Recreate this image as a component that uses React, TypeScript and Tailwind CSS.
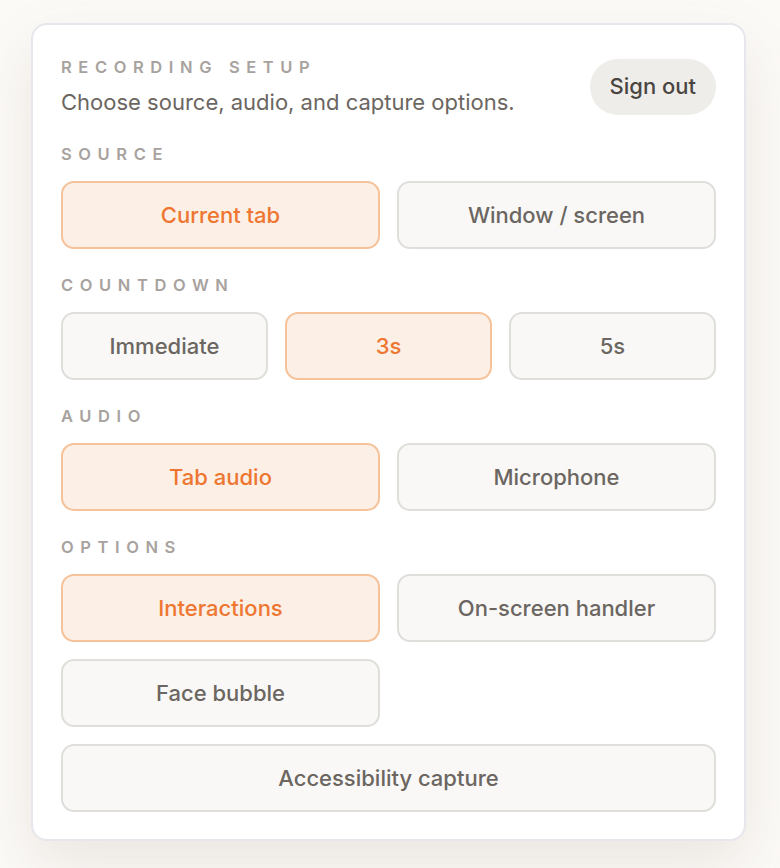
import React from "react";

const font = { fontFamily: "Inter, 'Noto Sans', sans-serif" };

function Opt({ label, active }: { label: string; active?: boolean }) {
  return (
    <button
      className={
        "h-[68px] w-full rounded-[13px] border-2 text-[22px] font-medium " +
        (active
          ? "border-[#f5c29a] bg-[#fbefe6] text-[#ee7631]"
          : "border-[#e0dedb] bg-[#f9f8f6] text-[#6b6661]")
      }
    >
      {label}
    </button>
  );
}

function Label({ children }: { children: React.ReactNode }) {
  return (
    <div className="text-[16.5px] leading-[20px] font-semibold tracking-[6.6px] text-[#a8a29e]">
      {children}
    </div>
  );
}

export default function App() {
  return (
    <div
      className="min-h-[868px] w-full bg-[#fcfaf7] pt-[23px] pl-[31px]"
      style={font}
    >
      <div className="w-[715px] rounded-[16px] border-2 border-[#e6e6ec] bg-white px-[28px] pt-[32px] pb-[27px] shadow-[0_24px_60px_rgba(110,90,70,0.12)]">
        <div className="flex items-center justify-between">
          <div className="flex flex-col">
            <Label>RECORDING SETUP</Label>
            <div className="mt-[11px] text-[22px] leading-[28px] text-[#6b6661]">
              Choose source, audio, and capture options.
            </div>
          </div>
          <button className="h-[56px] rounded-full bg-[#efedea] px-[20px] text-[22px] font-medium text-[#4a4541]">
            Sign out
          </button>
        </div>

        <div className="mt-[28px]">
          <Label>SOURCE</Label>
          <div className="mt-[17px] grid grid-cols-2 gap-[17px]">
            <Opt label="Current tab" active />
            <Opt label="Window / screen" />
          </div>
        </div>

        <div className="mt-[26px]">
          <Label>COUNTDOWN</Label>
          <div className="mt-[17px] grid grid-cols-3 gap-[17px]">
            <Opt label="Immediate" />
            <Opt label="3s" active />
            <Opt label="5s" />
          </div>
        </div>

        <div className="mt-[26px]">
          <Label>AUDIO</Label>
          <div className="mt-[17px] grid grid-cols-2 gap-[17px]">
            <Opt label="Tab audio" active />
            <Opt label="Microphone" />
          </div>
        </div>

        <div className="mt-[26px]">
          <Label>OPTIONS</Label>
          <div className="mt-[17px] grid grid-cols-2 gap-[17px]">
            <Opt label="Interactions" active />
            <Opt label="On-screen handler" />
            <Opt label="Face bubble" />
            <div />
            <div className="col-span-2">
              <Opt label="Accessibility capture" />
            </div>
          </div>
        </div>
      </div>
    </div>
  );
}
